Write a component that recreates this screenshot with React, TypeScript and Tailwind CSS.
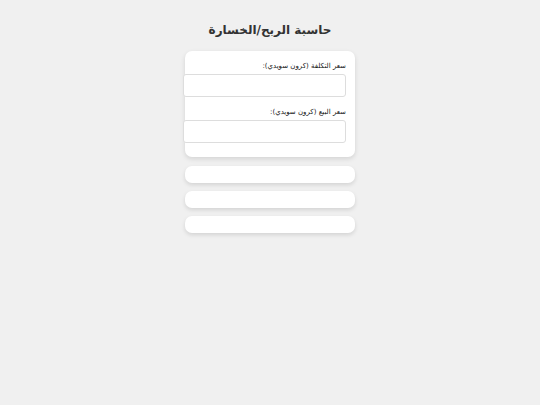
export default function App() {
  return (
    <div
      dir="rtl"
      className="min-h-screen bg-[#f0f0f0] flex flex-col items-center pt-[21px]"
      style={{ fontFamily: '"DejaVu Sans", sans-serif' }}
    >
      <h1 className="text-[12px] leading-[18px] font-bold text-[#333] mb-[12px]">
        حاسبة الربح/الخسارة
      </h1>

      <div className="w-[170px] bg-white rounded-[7px] shadow-[0_2px_5px_rgba(0,0,0,0.12)] pt-[10px] pb-[14px] px-[9px]">
        <label className="block text-[7px] leading-[10px] text-[#111] mb-[3px]">
          سعر التكلفة (كرون سويدي):
        </label>
        <input
          type="number"
          className="block w-[163px] h-[23px] bg-white border border-[#ddd] rounded-[3px] mb-[10px] outline-none"
        />
        <label className="block text-[7px] leading-[10px] text-[#111] mb-[3px]">
          سعر البيع (كرون سويدي):
        </label>
        <input
          type="number"
          className="block w-[163px] h-[23px] bg-white border border-[#ddd] rounded-[3px] outline-none"
        />
      </div>

      <div className="w-[170px] flex flex-col gap-[8px] mt-[9px]">
        <div className="h-[17px] bg-white rounded-[7px] shadow-[0_2px_4px_rgba(0,0,0,0.12)]" />
        <div className="h-[17px] bg-white rounded-[7px] shadow-[0_2px_4px_rgba(0,0,0,0.12)]" />
        <div className="h-[17px] bg-white rounded-[7px] shadow-[0_2px_4px_rgba(0,0,0,0.12)]" />
      </div>
    </div>
  );
}
